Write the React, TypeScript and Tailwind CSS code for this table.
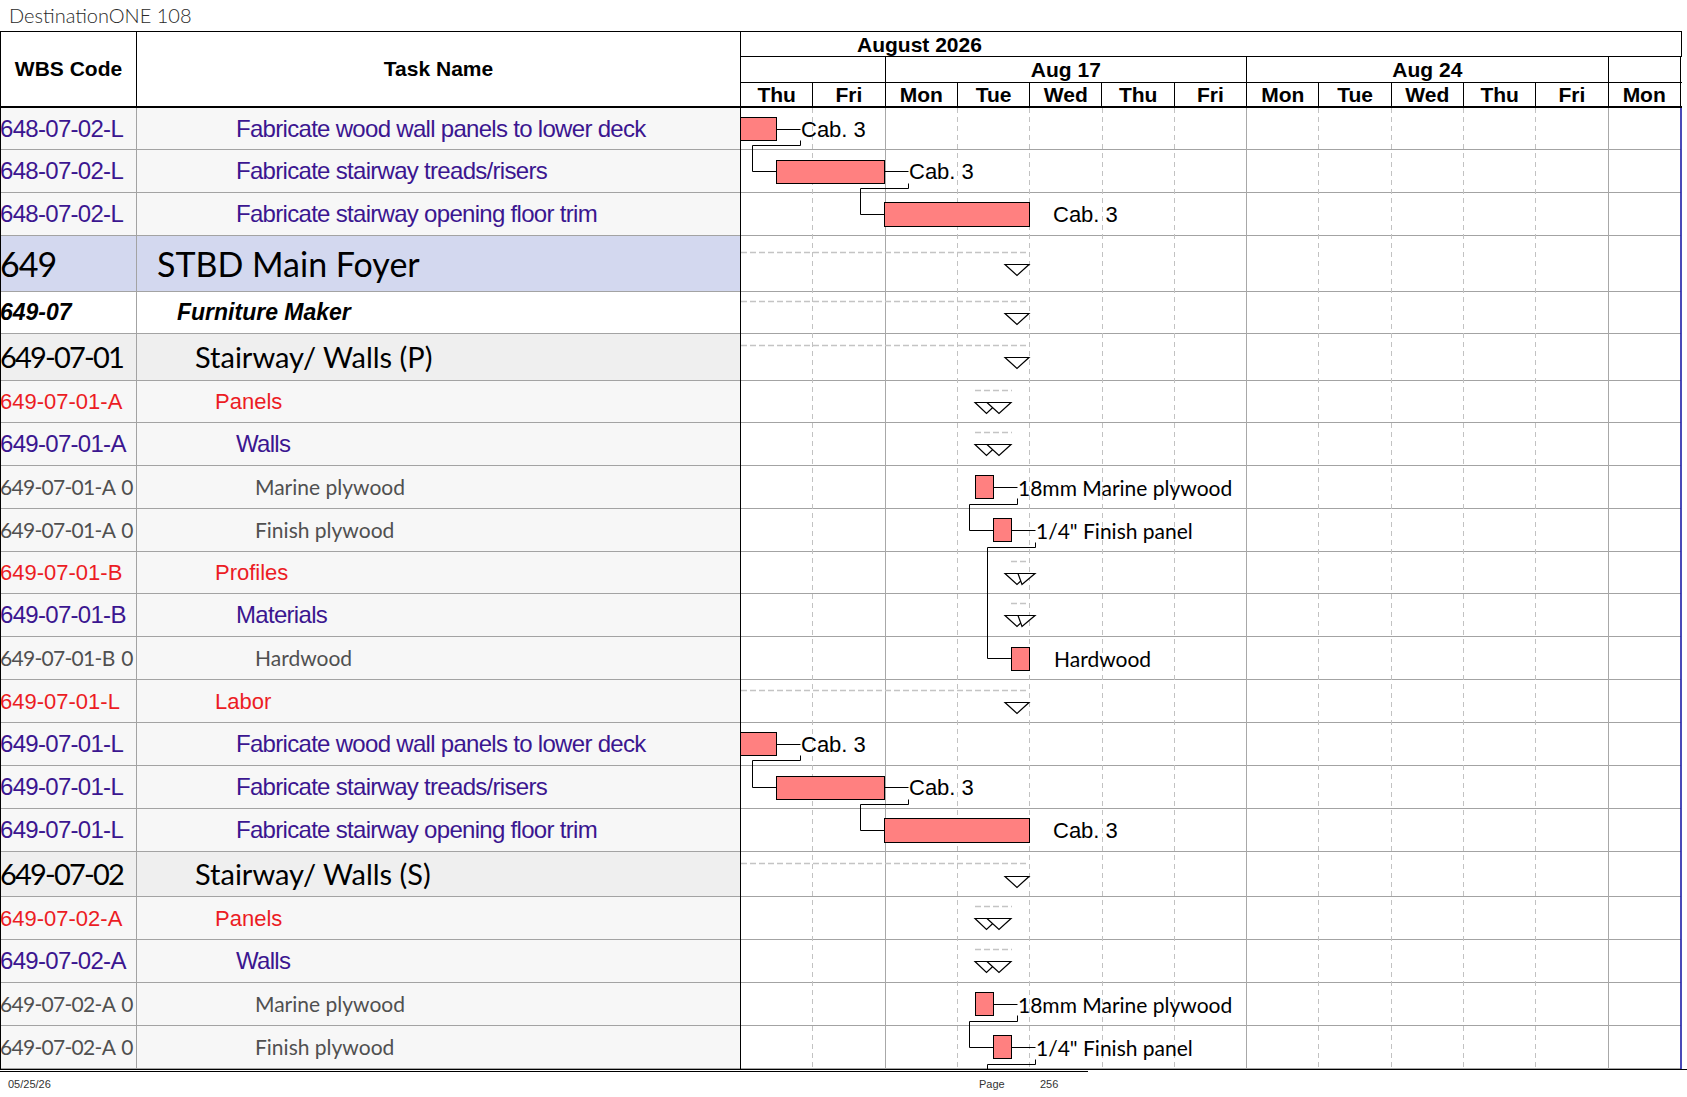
import React from "react";

type Kind = "task" | "phase" | "item" | "area" | "trade" | "section";

type Row = { wbs: string; name: string; kind: Kind; h: number };

const rows: Row[] = [
  { wbs: "648-07-02-L", name: "Fabricate wood wall panels to lower deck", kind: "task", h: 42 },
  { wbs: "648-07-02-L", name: "Fabricate stairway treads/risers", kind: "task", h: 43 },
  { wbs: "648-07-02-L", name: "Fabricate stairway opening floor trim", kind: "task", h: 43 },
  { wbs: "649", name: "STBD Main Foyer", kind: "area", h: 56 },
  { wbs: "649-07", name: "Furniture Maker", kind: "trade", h: 42 },
  { wbs: "649-07-01", name: "Stairway/ Walls (P)", kind: "section", h: 47 },
  { wbs: "649-07-01-A", name: "Panels", kind: "phase", h: 42 },
  { wbs: "649-07-01-A", name: "Walls", kind: "task", h: 43 },
  { wbs: "649-07-01-A 0", name: "Marine plywood", kind: "item", h: 43 },
  { wbs: "649-07-01-A 0", name: "Finish plywood", kind: "item", h: 43 },
  { wbs: "649-07-01-B", name: "Profiles", kind: "phase", h: 42 },
  { wbs: "649-07-01-B", name: "Materials", kind: "task", h: 43 },
  { wbs: "649-07-01-B 0", name: "Hardwood", kind: "item", h: 43 },
  { wbs: "649-07-01-L", name: "Labor", kind: "phase", h: 43 },
  { wbs: "649-07-01-L", name: "Fabricate wood wall panels to lower deck", kind: "task", h: 43 },
  { wbs: "649-07-01-L", name: "Fabricate stairway treads/risers", kind: "task", h: 43 },
  { wbs: "649-07-01-L", name: "Fabricate stairway opening floor trim", kind: "task", h: 43 },
  { wbs: "649-07-02", name: "Stairway/ Walls (S)", kind: "section", h: 45 },
  { wbs: "649-07-02-A", name: "Panels", kind: "phase", h: 43 },
  { wbs: "649-07-02-A", name: "Walls", kind: "task", h: 43 },
  { wbs: "649-07-02-A 0", name: "Marine plywood", kind: "item", h: 43 },
  { wbs: "649-07-02-A 0", name: "Finish plywood", kind: "item", h: 43 },
];

// classes per row kind: row bg, text style, wbs tweak, name indent
const styles: Record<Kind, { bg: string; text: string; wbs: string; indent: string }> = {
  task: {
    bg: "bg-[#f7f7f7]",
    text: "font-['Liberation_Sans',Arial,sans-serif] text-[24px] tracking-[-0.7px] text-[#3b1690]",
    wbs: "",
    indent: "pl-[99px]",
  },
  phase: {
    bg: "bg-[#f7f7f7]",
    text: "font-['Liberation_Sans',Arial,sans-serif] text-[22px] text-[#ec1c24]",
    wbs: "",
    indent: "pl-[78px]",
  },
  item: {
    bg: "bg-[#f7f7f7]",
    text: "font-['Lato',sans-serif] text-[21px] text-[#505050]",
    wbs: "tracking-[-0.7px] [word-spacing:2px]",
    indent: "pl-[118px]",
  },
  area: {
    bg: "bg-[#d3d8ef]",
    text: "font-['Lato',sans-serif] text-[34px] text-black",
    wbs: "tracking-[-1px]",
    indent: "pl-[20px]",
  },
  trade: {
    bg: "bg-white",
    text: "font-['Liberation_Sans',Arial,sans-serif] text-[23px] font-bold italic text-black",
    wbs: "",
    indent: "pl-[40px]",
  },
  section: {
    bg: "bg-[#efefef]",
    text: "font-['Lato',sans-serif] text-[29px] text-black",
    wbs: "tracking-[-1.8px]",
    indent: "pl-[58px]",
  },
};

const BODY_TOP = 108;
const DAY = 72.3;
const days = ["Thu", "Fri", "Mon", "Tue", "Wed", "Thu", "Fri", "Mon", "Tue", "Wed", "Thu", "Fri", "Mon"];

// top y of each row on the page
const tops: number[] = [];
rows.reduce((y, r) => {
  tops.push(y);
  return y + r.h;
}, BODY_TOP);
const BODY_BOTTOM = tops[tops.length - 1] + rows[rows.length - 1].h;

const ARIAL = "Liberation Sans, Arial, sans-serif";
const LATO = "Lato, sans-serif";
const BAR = "#ff8080";

const Bar = ({ x, y, w, h = 23 }: { x: number; y: number; w: number; h?: number }) => (
  <rect x={x + 0.5} y={y + 0.5} width={w} height={h} fill={BAR} stroke="#000" strokeWidth={1} />
);

const Label = ({ x, y, text, font = ARIAL, size = 22 }: { x: number; y: number; text: string; font?: string; size?: number }) => (
  <text x={x} y={y} fontFamily={font} fontSize={size} dominantBaseline="central" fill="#000">
    {text}
  </text>
);

const Line = ({ pts }: { pts: number[][] }) => (
  <polyline points={pts.map((p) => `${p[0] + 0.5},${p[1] + 0.5}`).join(" ")} fill="none" stroke="#000" strokeWidth={1} />
);

const Tri = ({ x1, x2, apex, y }: { x1: number; x2: number; apex: number; y: number }) => (
  <polygon points={`${x1},${y + 0.5} ${x2},${y + 0.5} ${apex},${y + 11.5}`} fill="#fff" stroke="#000" strokeWidth={1.2} />
);

const Dash = ({ x1, x2, y }: { x1: number; x2: number; y: number }) => (
  <line x1={x1} x2={x2} y1={y + 0.5} y2={y + 0.5} stroke="#c4c4c4" strokeWidth={1.5} strokeDasharray="6 3" />
);

// three chained fabrication bars
const FabChain = ({ t1, t2, t3 }: { t1: number; t2: number; t3: number }) => (
  <g>
    <Bar x={739} y={t1 + 9} w={37} />
    <Line pts={[[776, t1 + 21], [800, t1 + 21]]} />
    <Label x={801} y={t1 + 21} text="Cab. 3" />
    <Line pts={[[800, t1 + 32], [800, t1 + 37], [752, t1 + 37], [752, t2 + 21], [776, t2 + 21]]} />
    <Bar x={776} y={t2 + 10} w={108} />
    <Line pts={[[884, t2 + 21], [908, t2 + 21]]} />
    <Label x={909} y={t2 + 21} text="Cab. 3" />
    <Line pts={[[908, t2 + 33], [908, t2 + 38], [860, t2 + 38], [860, t3 + 21], [884, t3 + 21]]} />
    <Bar x={884} y={t3 + 9} w={145} h={24} />
    <Label x={1053} y={t3 + 21} text="Cab. 3" />
  </g>
);

const SummaryEnd = ({ dash, tri }: { dash: number; tri: number }) => (
  <g>
    <Dash x1={741} x2={1029} y={dash} />
    <Tri x1={1005} x2={1029} apex={1017} y={tri} />
  </g>
);

const ShortSummary = ({ t }: { t: number }) => (
  <g>
    <Dash x1={975} x2={1012} y={t + 9} />
    <Tri x1={975} x2={998} apex={986.5} y={t + 21} />
    <Tri x1={987} x2={1011} apex={999} y={t + 21} />
  </g>
);

const ProfileSummary = ({ t }: { t: number }) => (
  <g>
    <Dash x1={1011} x2={1028} y={t + 9} />
    <Tri x1={1005} x2={1029} apex={1017} y={t + 21} />
    <Tri x1={1018} x2={1035} apex={1022} y={t + 21} />
  </g>
);

const Materials = ({ tm, tf, next }: { tm: number; tf: number; next: number }) => (
  <g>
    <Bar x={975} y={tm + 9} w={18} />
    <Line pts={[[993, tm + 21], [1017, tm + 21]]} />
    <Label x={1018} y={tm + 21} text="18mm Marine plywood" font={LATO} size={21} />
    <Line pts={[[1017, tm + 32], [1017, tm + 38], [969, tm + 38], [969, tf + 21], [993, tf + 21]]} />
    <Bar x={993} y={tf + 9} w={18} />
    <Line pts={[[1011, tf + 21], [1035, tf + 21]]} />
    <Label x={1036} y={tf + 21} text={'1/4" Finish panel'} font={LATO} size={21} />
    <Line pts={[[1035, tf + 33], [1035, tf + 38], [987, tf + 38], [987, next]]} />
  </g>
);

const Chart = () => {
  const h = BODY_BOTTOM - BODY_TOP;
  const t = tops;
  const hardMid = t[12] + 21;
  return (
    <svg width={941} height={h} className="block">
      <g transform={`translate(-741 -${BODY_TOP})`}>
        {/* row lines */}
        {rows.map((r, i) => (
          <line key={i} x1={741} x2={1681} y1={t[i] + r.h - 0.5} y2={t[i] + r.h - 0.5} stroke="#a3a3a3" strokeWidth={1} />
        ))}
        {/* day lines */}
        {days.slice(1).map((_, i) => {
          const x = Math.round(740 + (i + 1) * DAY) + 0.5;
          const week = i + 1 === 2 || i + 1 === 7 || i + 1 === 12;
          return (
            <line
              key={i}
              x1={x}
              x2={x}
              y1={BODY_TOP}
              y2={BODY_BOTTOM}
              stroke={week ? "#a8a8a8" : "#c2c2c2"}
              strokeWidth={1}
              strokeDasharray={week ? undefined : "5 4"}
            />
          );
        })}
        <line x1={1681} x2={1681} y1={BODY_TOP} y2={BODY_BOTTOM} stroke="#1c1ca6" strokeWidth={1.6} />

        <FabChain t1={t[0]} t2={t[1]} t3={t[2]} />
        <SummaryEnd dash={t[3] + 16} tri={t[3] + 28} />
        <SummaryEnd dash={t[4] + 9} tri={t[4] + 21} />
        <SummaryEnd dash={t[5] + 11} tri={t[5] + 23} />
        <ShortSummary t={t[6]} />
        <ShortSummary t={t[7]} />
        <Materials tm={t[8]} tf={t[9]} next={hardMid} />
        <Line pts={[[987, hardMid], [1011, hardMid]]} />
        <ProfileSummary t={t[10]} />
        <ProfileSummary t={t[11]} />
        <Bar x={1011} y={t[12] + 10} w={18} />
        <Label x={1054} y={t[12] + 21} text="Hardwood" font={LATO} size={21} />
        <SummaryEnd dash={t[13] + 10} tri={t[13] + 22} />
        <FabChain t1={t[14]} t2={t[15]} t3={t[16]} />
        <SummaryEnd dash={t[17] + 11} tri={t[17] + 24} />
        <ShortSummary t={t[18]} />
        <ShortSummary t={t[19]} />
        <Materials tm={t[20]} tf={t[21]} next={BODY_BOTTOM} />
      </g>
    </svg>
  );
};

const App: React.FC = () => {
  return (
    <div className="relative h-[1097px] w-[1687px] overflow-hidden bg-white text-black">
      {/* Title */}
      <div className="h-[31px] pl-[9px] pt-[1px] font-['Lato',sans-serif] text-[20px] font-light leading-[28px] text-[#2a2a2a]">
        DestinationONE 108
      </div>

      <div className="flex w-[1687px]">
        {/* Task table */}
        <div className="w-[740px] shrink-0 border-l border-black">
          <div className="flex h-[77px] border-t border-b-2 border-black font-['Liberation_Sans',Arial,sans-serif] text-[21px] font-bold">
            <div className="flex w-[136px] items-center justify-center border-r border-black">WBS Code</div>
            <div className="flex flex-1 items-center justify-center">Task Name</div>
          </div>
          {rows.map((r, i) => {
            const s = styles[r.kind];
            return (
              <div
                key={i}
                className={`flex items-center border-b border-[#a3a3a3] ${s.bg} ${s.text}`}
                style={{ height: r.h }}
              >
                <div
                  className={`flex h-full w-[136px] items-center overflow-hidden whitespace-pre border-r border-[#a3a3a3] -indent-[1px] ${s.wbs}`}
                >
                  {r.wbs}
                </div>
                <div className={`flex h-full flex-1 items-center whitespace-nowrap ${s.indent}`}>{r.name}</div>
              </div>
            );
          })}
        </div>

        {/* Gantt */}
        <div className="w-[942px] shrink-0 border-l border-black">
          <div className="h-[77px] border-t border-b-2 border-black font-['Liberation_Sans',Arial,sans-serif] text-[21px] font-bold leading-none">
            <div className="flex h-[25px] items-center border-b border-r border-black pl-[116px]">August 2026</div>
            <div className="grid h-[26px] grid-cols-[144.6px_361.5px_361.5px_72.3px] border-b border-black">
              <div className="border-r border-black" />
              <div className="flex items-center justify-center border-r border-black">Aug 17</div>
              <div className="flex items-center justify-center border-r border-black">Aug 24</div>
              <div className="border-r border-black" />
            </div>
            <div className="grid h-[23px] grid-cols-[repeat(13,72.3px)]">
              {days.map((d, i) => (
                <div key={i} className="flex items-center justify-center border-r border-black">
                  {d}
                </div>
              ))}
            </div>
          </div>
          <Chart />
        </div>
      </div>

      {/* bottom rule */}
      <div className="w-[1687px] border-t border-black" />
      <div className="mt-px h-px w-[1088px] bg-black" />

      {/* Footer */}
      <div className="flex h-[24px] items-center font-['Liberation_Sans',Arial,sans-serif] text-[11px] text-[#333]">
        <span className="w-[979px] pl-[8px]">05/25/26</span>
        <span className="w-[61px]">Page</span>
        <span>256</span>
      </div>
    </div>
  );
};

export default App;
